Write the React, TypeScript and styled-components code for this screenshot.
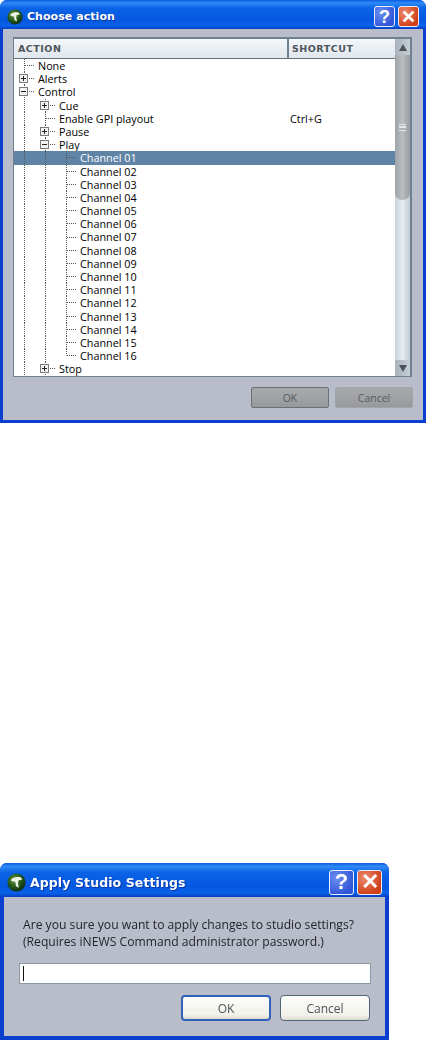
import React from 'react';
import styled, { createGlobalStyle } from 'styled-components';

const GlobalStyle = createGlobalStyle`
  html, body { margin: 0; padding: 0; background: #fff; }
  body { font-family: "Open Sans", "Liberation Sans", sans-serif; }
`;

const Page = styled.div`
  width: 427px;
  height: 1042px;
  overflow: hidden;
  display: flex;
  flex-direction: column;
  gap: 440px;
`;

const Dialog = styled.div<{ $w: number; $h: number; $soft?: boolean }>`
  width: ${({ $w }) => $w}px;
  height: ${({ $h }) => $h}px;
  flex: none;
  box-sizing: border-box;
  display: flex;
  flex-direction: column;
  background: #0a3fd0;
  border-radius: 7px 7px 0 0;
  overflow: hidden;
  ${({ $soft }) => ($soft ? 'filter: blur(0.45px);' : '')}
`;

const TitleBar = styled.div<{ $h: number; $pad: number }>`
  height: ${({ $h }) => $h}px;
  flex: none;
  box-sizing: border-box;
  display: flex;
  align-items: center;
  padding: 4px ${({ $pad }) => $pad}px 0 ${({ $pad }) => $pad}px;
  background: linear-gradient(180deg, #0a5be0 0%, #2f8af5 10%, #0b63e6 28%, #0457df 70%, #0a62e8 88%, #0340c4 100%);
`;

const TitleText = styled.span<{ $size: number; $spacing: number }>`
  flex: 1;
  margin-left: 4px;
  color: #fff;
  font-family: "DejaVu Sans", sans-serif;
  font-weight: 700;
  font-size: ${({ $size }) => $size}px;
  letter-spacing: ${({ $spacing }) => $spacing}px;
  text-shadow: 1px 1px 0 #0a3aa8;
  white-space: nowrap;
`;

const CaptionButton = styled.div<{ $kind: 'help' | 'close'; $size: number }>`
  width: ${({ $size }) => $size}px;
  height: ${({ $size }) => $size}px;
  box-sizing: border-box;
  margin-left: 3px;
  border: 1px solid #e8eefc;
  border-radius: 3px;
  display: flex;
  align-items: center;
  justify-content: center;
  color: #fff;
  font-family: "Liberation Sans", sans-serif;
  font-weight: 700;
  font-size: ${({ $size }) => $size - 3}px;
  line-height: 1;
  background: ${({ $kind }) =>
    $kind === 'help'
      ? 'radial-gradient(circle at 30% 30%, #6d8ff0, #2f55d8 75%)'
      : 'radial-gradient(circle at 30% 30%, #ec8a6c, #cf3f18 75%)'};
`;

const Body = styled.div<{ $side: number }>`
  flex: 1;
  min-height: 0;
  margin: 0 ${({ $side }) => $side}px ${({ $side }) => $side}px;
  background: #b9bdc9;
  display: flex;
  flex-direction: column;
`;

const ActionBody = styled(Body)`
  padding: 8px 10px 0 10px;
`;

const TreePanel = styled.div`
  width: 399px;
  height: 340px;
  box-sizing: border-box;
  flex: none;
  display: flex;
  border: 2px solid #6f8090;
  border-left-width: 1px;
  border-bottom-width: 1px;
  background: #fff;
`;

const TreeColumn = styled.div`
  flex: 1;
  min-width: 0;
  display: flex;
  flex-direction: column;
  overflow: hidden;
`;

const HeaderRow = styled.div`
  height: 20px;
  flex: none;
  display: flex;
  box-sizing: border-box;
  border-bottom: 1px solid #5f7080;
  background: linear-gradient(180deg, #f4f7fa, #dfe6ec);
`;

const HeaderCell = styled.div<{ $w?: number }>`
  ${({ $w }) => ($w ? `width: ${$w}px; flex: none;` : 'flex: 1;')}
  box-sizing: border-box;
  padding-left: 4px;
  display: flex;
  align-items: center;
  font-family: "DejaVu Sans", sans-serif;
  font-weight: 700;
  font-size: 9.5px;
  letter-spacing: 0.5px;
  color: #4c545c;
  & + & { border-left: 2px solid #6f8090; padding-left: 3px; }
`;

const Row = styled.div<{ $selected?: boolean }>`
  height: 13.2px;
  flex: none;
  display: flex;
  align-items: stretch;
  background: ${({ $selected }) => ($selected ? '#5f84a6' : 'transparent')};
  color: ${({ $selected }) => ($selected ? '#fff' : '#000')};
  font-size: 10.8px;
  line-height: 13px;
`;

const dots = 'repeating-linear-gradient(to bottom, #555 0 1px, transparent 1px 2px)';
const dotsH = 'repeating-linear-gradient(to right, #555 0 1px, transparent 1px 2px)';

type CellKind = 'blank' | 'line' | 'tee' | 'elbow';

const backgrounds: Record<CellKind, string> = {
  blank: 'none',
  line: `${dots} center top / 1px 100% no-repeat`,
  tee: `${dots} center top / 1px 100% no-repeat, ${dotsH} right center / 50% 1px no-repeat`,
  elbow: `${dots} center top / 1px 50% no-repeat, ${dotsH} right center / 50% 1px no-repeat`,
};

const Cell = styled.span<{ $kind: CellKind }>`
  width: 21px;
  flex: none;
  display: flex;
  align-items: center;
  justify-content: center;
  background: ${({ $kind }) => backgrounds[$kind]};
`;

const Expander = styled.span`
  width: 9px;
  height: 9px;
  margin-left: -2px;
  box-sizing: border-box;
  border: 1px solid #7a7a7a;
  background: #f2f2f2;
  display: flex;
  align-items: center;
  justify-content: center;
  color: #222;
`;

const Label = styled.span<{ $w: number }>`
  flex: 0 0 ${({ $w }) => $w}px;
  padding-left: 3px;
  white-space: nowrap;
`;

const Shortcut = styled.span`
  width: 107px;
  flex: none;
  white-space: nowrap;
`;

const ScrollBar = styled.div`
  width: 15px;
  flex: none;
  display: flex;
  flex-direction: column;
  background: linear-gradient(90deg, #c8d2da, #e8edf1 50%, #c4ced6);
`;

const ScrollEnd = styled.div`
  height: 16px;
  flex: none;
  display: flex;
  align-items: center;
  justify-content: center;
  background: linear-gradient(90deg, #a9b3bb, #c6ced5);
`;

const Thumb = styled.div`
  height: 145px;
  flex: none;
  border-radius: 0 0 7px 7px;
  display: flex;
  align-items: center;
  justify-content: center;
  background: linear-gradient(90deg, #9ea4a8, #b9bdc0 50%, #989da2);
`;

const Grip = styled.div`
  width: 7px;
  height: 5px;
  border-top: 1px solid #e6e8ea;
  border-bottom: 1px solid #e6e8ea;
  background: linear-gradient(#b0b4b8 0 1px, #e6e8ea 1px 3px, #b0b4b8 3px);
  background-size: 100% 100%;
`;

const ScrollTrack = styled.div`
  flex: 1;
`;

const Arrow = styled.div<{ $down?: boolean }>`
  width: 0;
  height: 0;
  border-left: 4.5px solid transparent;
  border-right: 4.5px solid transparent;
  ${({ $down }) => ($down ? 'border-top: 7px solid #4d5359;' : 'border-bottom: 7px solid #4d5359;')}
`;

const ActionFooter = styled.div`
  display: flex;
  justify-content: flex-end;
  gap: 6px;
  margin-top: 10px;
`;

const GrayButton = styled.div<{ $primary?: boolean }>`
  width: 78px;
  height: 21px;
  box-sizing: border-box;
  border-radius: 2px;
  display: flex;
  align-items: center;
  justify-content: center;
  font-size: 10.5px;
  color: #555c60;
  border: 1px solid ${({ $primary }) => ($primary ? '#6a7078' : '#a2a4a8')};
  background: linear-gradient(180deg, #a6a8ac, #9fa1a4 60%, #96989c);
`;

const Message = styled.div`
  margin-top: 19px;
  padding-left: 19px;
  font-family: "Open Sans", sans-serif;
  font-size: 12.15px;
  line-height: 17px;
  color: #22262c;
  white-space: nowrap;
`;

const TextField = styled.div`
  width: 352px;
  height: 21px;
  margin: 13px 0 0 15px;
  box-sizing: border-box;
  border: 1px solid #8b99a5;
  background: #fff;
  display: flex;
  align-items: center;
  padding-left: 3px;
`;

const Caret = styled.span`
  width: 1px;
  height: 15px;
  background: #111;
`;

const SettingsFooter = styled.div`
  display: flex;
  justify-content: flex-end;
  gap: 9px;
  margin: 11px 15px 0 0;
`;

const RaisedButton = styled.div<{ $primary?: boolean }>`
  width: 90px;
  height: 26px;
  box-sizing: border-box;
  border-radius: 4px;
  display: flex;
  align-items: center;
  justify-content: center;
  font-size: 12px;
  color: #4c5258;
  border: ${({ $primary }) => ($primary ? '2px solid #2f62b8' : '1.5px solid #4f6478')};
  background: linear-gradient(180deg, #fdfdfb, #f2f1ea 80%, #dedbd0);
`;

const Logo: React.FC<{ size: number }> = ({ size }) => (
  <svg width={size} height={size} viewBox="0 0 16 16" style={{ flex: 'none' }}>
    <defs>
      <radialGradient id="globe" cx="0.4" cy="0.35" r="0.75">
        <stop offset="0" stopColor="#6d9a45" />
        <stop offset="0.55" stopColor="#20551a" />
        <stop offset="1" stopColor="#0a1f10" />
      </radialGradient>
    </defs>
    <circle cx="8" cy="8" r="7.6" fill="url(#globe)" />
    <path d="M3 6 C5 3.4 8 2.8 11.5 3.6 L13 5.4 L9.8 6 L9.2 8.4 L10 12.4 L7.6 11.2 L7 7.4 L5 7.2 Z" fill="#eef3e8" />
  </svg>
);

const PlusMinus: React.FC<{ open?: boolean }> = ({ open }) => (
  <svg width="7" height="7" viewBox="0 0 7 7">
    <path d={open ? 'M1 3.5H6' : 'M1 3.5H6M3.5 1V6'} stroke="#222" strokeWidth="1" />
  </svg>
);

type TreeRow = {
  label: string;
  guides: CellKind[];
  box?: 'plus' | 'minus';
  shortcut?: string;
  selected?: boolean;
};

const channels: TreeRow[] = Array.from({ length: 16 }, (_, i) => ({
  label: `Channel ${String(i + 1).padStart(2, '0')}`,
  guides: ['line', 'line', i === 15 ? 'elbow' : 'tee'],
  selected: i === 0,
}));

const rows: TreeRow[] = [
  { label: 'None', guides: ['tee'] },
  { label: 'Alerts', guides: ['tee'], box: 'plus' },
  { label: 'Control', guides: ['tee'], box: 'minus' },
  { label: 'Cue', guides: ['line', 'tee'], box: 'plus' },
  { label: 'Enable GPI playout', guides: ['line', 'tee'], shortcut: 'Ctrl+G' },
  { label: 'Pause', guides: ['line', 'tee'], box: 'plus' },
  { label: 'Play', guides: ['line', 'tee'], box: 'minus' },
  ...channels,
  { label: 'Stop', guides: ['line', 'tee'], box: 'plus' },
];

const TreeLine: React.FC<{ row: TreeRow }> = ({ row }) => {
  const last = row.guides.length - 1;
  return (
    <Row $selected={row.selected}>
      {row.guides.map((kind, i) => (
        <Cell key={i} $kind={kind}>
          {i === last && row.box && (
            <Expander>
              <PlusMinus open={row.box === 'minus'} />
            </Expander>
          )}
        </Cell>
      ))}
      <Label $w={273 - row.guides.length * 21}>{row.label}</Label>
      <Shortcut>{row.shortcut}</Shortcut>
    </Row>
  );
};

const ChooseAction: React.FC = () => (
  <Dialog $w={426} $h={423}>
    <TitleBar $h={29} $pad={7}>
      <Logo size={16} />
      <TitleText $size={11} $spacing={0.05}>Choose action</TitleText>
      <CaptionButton $kind="help" $size={21}>?</CaptionButton>
      <CaptionButton $kind="close" $size={21}>✕</CaptionButton>
    </TitleBar>
    <ActionBody $side={3}>
      <TreePanel>
        <TreeColumn>
          <HeaderRow>
            <HeaderCell $w={273}>ACTION</HeaderCell>
            <HeaderCell>SHORTCUT</HeaderCell>
          </HeaderRow>
          {rows.map((row, i) => (
            <TreeLine key={i} row={row} />
          ))}
        </TreeColumn>
        <ScrollBar>
          <ScrollEnd>
            <Arrow />
          </ScrollEnd>
          <Thumb>
            <Grip />
          </Thumb>
          <ScrollTrack />
          <ScrollEnd>
            <Arrow $down />
          </ScrollEnd>
        </ScrollBar>
      </TreePanel>
      <ActionFooter>
        <GrayButton $primary>OK</GrayButton>
        <GrayButton>Cancel</GrayButton>
      </ActionFooter>
    </ActionBody>
  </Dialog>
);

const ApplySettings: React.FC = () => (
  <Dialog $w={389} $h={177} $soft>
    <TitleBar $h={34} $pad={7}>
      <Logo size={19} />
      <TitleText $size={12.5} $spacing={0.1}>Apply Studio Settings</TitleText>
      <CaptionButton $kind="help" $size={25}>?</CaptionButton>
      <CaptionButton $kind="close" $size={25}>✕</CaptionButton>
    </TitleBar>
    <Body $side={4}>
      <Message>
        Are you sure you want to apply changes to studio settings?
        <br />
        (Requires iNEWS Command administrator password.)
      </Message>
      <TextField>
        <Caret />
      </TextField>
      <SettingsFooter>
        <RaisedButton $primary>OK</RaisedButton>
        <RaisedButton>Cancel</RaisedButton>
      </SettingsFooter>
    </Body>
  </Dialog>
);

export default function App() {
  return (
    <Page>
      <GlobalStyle />
      <ChooseAction />
      <ApplySettings />
    </Page>
  );
}
